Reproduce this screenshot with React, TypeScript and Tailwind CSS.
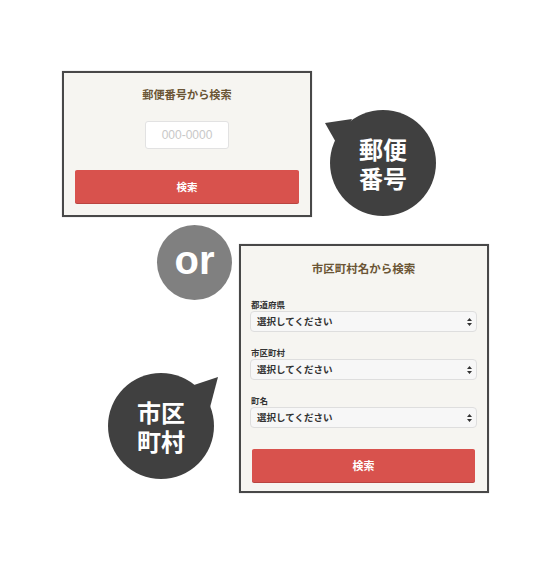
import React from 'react';

const jp = { fontFamily: '"Noto Sans CJK JP", "Noto Sans", sans-serif' };

function Bubble({ top, bottom, tail }: { top: string; bottom: string; tail: string }) {
  return (
    <div className="relative w-[106px] h-[106px] shrink-0">
      <svg className="absolute inset-0 overflow-visible" width="106" height="106" viewBox="0 0 106 106">
        <path d={tail} fill="#404040" />
        <circle cx="53" cy="53" r="53" fill="#404040" />
      </svg>
      <div className="relative flex h-full items-center justify-center text-center text-[24px] font-bold leading-[29px] text-white" style={jp}>
        <p>
          {top}
          <br />
          {bottom}
        </p>
      </div>
    </div>
  );
}

function SelectBox({ label }: { label: string }) {
  return (
    <div className="flex flex-col">
      <div className="mb-px ml-px flex h-[12px] items-center text-[8.5px] font-bold text-[#333]">{label}</div>
      <div className="relative flex h-[21px] items-center rounded-[4px] border border-[#dedede] bg-[#f7f7f7] pl-[6px] text-[9.5px] font-bold text-[#333]">
        選択してください
        <svg className="absolute right-[4px] top-[6px]" width="5" height="8" viewBox="0 0 5 8">
          <path d="M2.5 0 L5 3 H0 Z M2.5 8 L5 5 H0 Z" fill="#333" />
        </svg>
      </div>
    </div>
  );
}

export default function App() {
  return (
    <div className="w-[550px] h-[565px] overflow-hidden bg-white pt-[71px]" style={jp}>
      <div className="flex items-start pl-[62px]">
        <div className="flex h-[146px] w-[250px] flex-col items-center border-2 border-[#484848] bg-[#f6f5f1] px-[11px] shadow-[0_0_1px_rgba(0,0,0,0.3)]">
          <h2 className="mt-[13px] text-[11.2px] font-bold leading-[16px] text-[#6b5535]">郵便番号から検索</h2>
          <input
            placeholder="000-0000"
            className="mt-[19px] h-[28px] w-[84px] rounded-[3px] border border-[#e2e2e2] bg-white text-center text-[12px] text-[#999] outline-none placeholder:text-[#c8c8c8]"
            style={{ fontFamily: '"Liberation Sans", Arial, sans-serif' }}
          />
          <button className="mt-[21px] h-[33px] w-full rounded-[2px] bg-[#d8524d] text-[10.5px] font-bold text-white shadow-[0_1px_0_#b94440]">
            検索
          </button>
        </div>
        <div className="ml-[18px] mt-[39px]">
          <Bubble top="郵便" bottom="番号" tail="M-5 13 L22 9 L8 36 Z" />
        </div>
      </div>

      <div className="mt-[8px] flex items-start pl-[108px]">
        <div className="flex w-[124px] flex-col">
          <div className="ml-[49px] flex h-[75px] w-[75px] items-center justify-center rounded-full bg-[#808080]">
            <span className="-mt-[5px] text-[40px] font-bold text-white" style={{ fontFamily: '"Liberation Sans", Arial, sans-serif' }}>or</span>
          </div>
          <div className="mt-[73px]">
            <Bubble top="市区" bottom="町村" tail="M110 4 L80 14 L100 42 Z" />
          </div>
        </div>
        <div className="ml-[7px] mt-[19px] flex h-[249px] w-[250px] flex-col border-2 border-[#484848] bg-[#f6f5f1] pl-[9px] pr-[10px] shadow-[0_0_1px_rgba(0,0,0,0.3)]">
          <h2 className="mt-[14px] text-center text-[11.5px] font-bold leading-[16px] text-[#6b5535]">市区町村名から検索</h2>
          <div className="mt-[22px] flex flex-col gap-[14px]">
            <SelectBox label="都道府県" />
            <SelectBox label="市区町村" />
            <SelectBox label="町名" />
          </div>
          <button className="mx-[2px] mt-[21px] h-[33px] rounded-[2px] bg-[#d8524d] text-[11px] font-bold text-white shadow-[0_1px_0_#b94440]">
            検索
          </button>
        </div>
      </div>
    </div>
  );
}
